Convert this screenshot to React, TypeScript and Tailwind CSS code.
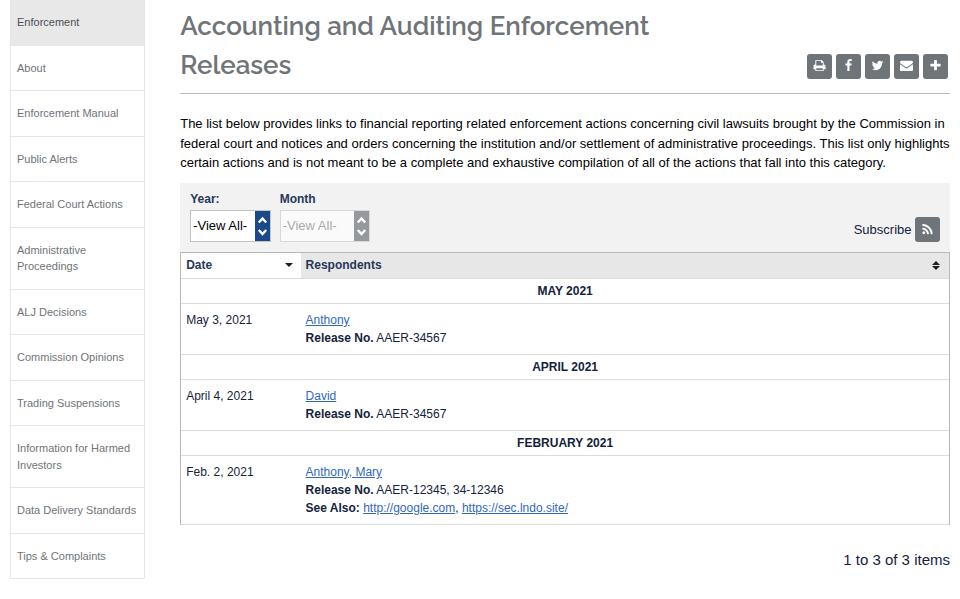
import React from "react";

const ICONS = {
  print:
    "M448 1536h896v-256h-896v256zm0-640h896v-384h-160q-40 0-68-28t-28-68v-160h-640v640zm1152 64q0-26-19-45t-45-19-45 19-19 45 19 45 45 19 45-19 19-45zm128 0v416q0 13-9.5 22.5t-22.5 9.5h-224v160q0 40-28 68t-68 28h-960q-40 0-68-28t-28-68v-160h-224q-13 0-22.5-9.5t-9.5-22.5v-416q0-79 56.5-135.5t135.5-56.5h64v-544q0-40 28-68t68-28h672q40 0 88 20t76 48l152 152q28 28 48 76t20 88v256h64q79 0 135.5 56.5t56.5 135.5z",
  facebook:
    "M1343 12v264h-157q-86 0-116 36t-30 108v189h293l-39 296h-254v759h-306v-759h-255v-296h255v-218q0-186 104-288.500t277-102.500q147 0 228 12z",
  twitter:
    "M1684 408q-67 98-162 167 1 14 1 42 0 130-38 259.500t-115.500 248.500-184.500 210.500-258 146-323 54.500q-271 0-496-145 35 4 78 4 225 0 401-138-105-2-188-64.500t-114-159.500q33 5 61 5 43 0 85-11-112-23-185.500-111.500t-73.500-205.500v-4q68 38 146 41-66-44-105-115t-39-154q0-88 44-163 121 149 294.500 238.500t371.500 99.500q-8-38-8-74 0-134 94.500-228.500t228.500-94.500q140 0 236 102 109-21 205-78-37 115-142 178 93-10 186-50z",
  envelope:
    "M1792 710v794q0 66-47 113t-113 47h-1472q-66 0-113-47t-47-113v-794q44 49 101 87 362 246 497 345 57 42 92.500 65.500t94.500 48 110 24.500h2q51 0 110-24.500t94.500-48 92.500-65.500q170-123 498-345 57-39 100-87zm0-294q0 79-49 151t-122 123q-376 261-468 325-10 7-42.500 31t-54 38.500-52 32.500-57.500 27-50 9h-2q-23 0-50-9t-57.500-27-52-32.500-54-38.500-42.500-31q-91-64-262-182.500t-205-142.500q-62-42-117-115.500t-55-136.500q0-78 41.500-130t118.500-52h1472q65 0 112.500 47t47.500 113z",
  plus: "M1600 736v192q0 40-28 68t-68 28h-416v416q0 40-28 68t-68 28h-192q-40 0-68-28t-28-68v-416h-416q-40 0-68-28t-28-68v-192q0-40 28-68t68-28h416v-416q0-40 28-68t68-28h192q40 0 68 28t28 68v416h416q40 0 68 28t28 68z",
  rss: "M576 1344q0 80-56 136t-136 56-136-56-56-136 56-136 136-56 136 56 56 136zm512 123q2 28-17 48-18 21-47 21h-135q-25 0-43-16.500t-20-41.500q-22-229-184.500-391.500t-391.500-184.500q-25-2-41.500-20t-16.500-43v-135q0-29 21-47 17-17 43-17h5q160 13 306 80.500t259 181.500q114 113 181.500 259t80.500 306zm512 2q2 27-18 47-18 20-46 20h-143q-26 0-44.500-17.500t-19.500-42.500q-12-215-101-408.500t-231.500-336-336-231.500-408.500-102q-25-1-42.500-19.500t-17.500-43.500v-143q0-28 20-46 18-18 44-18h3q262 13 501.500 120t425.500 294q187 186 294 425.500t120 501.500z",
};

const NAV = [
  "Enforcement",
  "About",
  "Enforcement Manual",
  "Public Alerts",
  "Federal Court Actions",
  "Administrative Proceedings",
  "ALJ Decisions",
  "Commission Opinions",
  "Trading Suspensions",
  "Information for Harmed Investors",
  "Data Delivery Standards",
  "Tips & Complaints",
];

function IconButton({ name }: { name: keyof typeof ICONS }) {
  return (
    <button
      className={`flex size-[25px] items-start justify-center rounded-[3px] bg-[#6f7478] ${
        name === "rss" ? "pt-1.5" : "pt-[5px]"
      }`}
    >
      <svg viewBox="0 0 1792 1792" className="size-[13px] fill-white">
        <path d={ICONS[name]} />
      </svg>
    </button>
  );
}

function Picker({ label, width, disabled }: { label: string; width: string; disabled?: boolean }) {
  return (
    <div>
      <div className="h-[18px] text-xs leading-[18px] font-bold text-[#283858]">{label}</div>
      <div
        className={`mt-[2px] flex h-8 items-stretch justify-between border ${width} ${
          disabled ? "border-[#d8d8d8] bg-[#fafafa] text-[#aaaaaa]" : "border-[#c4c4c4] bg-white text-black"
        }`}
      >
        <span className="pl-[2px] text-[13px] leading-[30px] whitespace-nowrap">-View All-</span>
        <span className={`flex w-[15px] items-center justify-center ${disabled ? "bg-[#95989c]" : "bg-[#1b4a8c]"}`}>
          <svg viewBox="0 0 15 30" className="h-[30px] w-[15px] fill-none stroke-white stroke-[2.4]">
            <path d="M3.800 11.500 7.500 7.500 11.200 11.500M3.800 19 7.500 23 11.200 19" />
          </svg>
        </span>
      </div>
    </div>
  );
}

function MonthRow({ children }: { children: React.ReactNode }) {
  return (
    <div className="h-[25px] border-b border-[#dcdcdc] text-center leading-6 font-bold">{children}</div>
  );
}

function Entry({ date, children }: { date: string; children: React.ReactNode }) {
  return (
    <div className="flex border-b border-[#dcdcdc] py-[7px] leading-[18px]">
      <div className="w-[120px] pl-[5px]">{date}</div>
      <div className="pl-[4.400px]">{children}</div>
    </div>
  );
}

function Link({ children }: { children: React.ReactNode }) {
  return (
    <a href="#" className="text-[#3268b8] underline">
      {children}
    </a>
  );
}

export default function App() {
  return (
    <div className="flex h-[599px] w-[960px] overflow-hidden bg-white pl-[10px] font-['Liberation_Sans',Arial,sans-serif] text-[#14233c]">
      <nav className="w-[135px] shrink-0 text-[11px] leading-[16.5px] text-[#6f7478]">
        {NAV.map((item, i) => (
          <div
            key={item}
            className={`border-x border-b border-[#e6e6e6] py-[14px] pr-[5px] pl-[6px] ${
              i === 0 ? "bg-[#e8e8e8] text-[#4c5054]" : ""
            }`}
          >
            {item}
          </div>
        ))}
      </nav>

      <main className="ml-[35.2px] w-[769.8px] shrink-0">
        <header className="flex h-[94px] items-start justify-between border-b border-[#b9bbbd] pt-[7px]">
          <h1 className="w-[520px] font-[Raleway,Lato,sans-serif] text-[26px] leading-[39px] font-semibold text-[#6f7478]">
            Accounting and Auditing Enforcement Releases
          </h1>
          <div className="mt-[47px] mr-[2px] flex gap-1">
            <IconButton name="print" />
            <IconButton name="facebook" />
            <IconButton name="twitter" />
            <IconButton name="envelope" />
            <IconButton name="plus" />
          </div>
        </header>

        <p className="mt-5 h-[69px] text-[13px] leading-[19.5px] whitespace-nowrap text-black">
          The list below provides links to financial reporting related enforcement actions concerning civil lawsuits brought by the Commission in
          <br />
          federal court and notices and orders concerning the institution and/or settlement of administrative proceedings. This list only highlights
          <br />
          certain actions and is not meant to be a complete and exhaustive compilation of all of the actions that fall into this category.
        </p>

        <section className="flex h-[69px] justify-between bg-[#f2f2f2] pl-[10px]">
          <div className="flex gap-[8.500px] pt-[7px]">
            <Picker label="Year:" width="w-[81px]" />
            <Picker label="Month" width="w-[90px]" disabled />
          </div>
          <div className="mt-[34px] mr-[10px] flex h-[25px] gap-[3.500px]">
            <span className="text-[13px] leading-[25px]">Subscribe</span>
            <IconButton name="rss" />
          </div>
        </section>

        <section className="border-x border-t border-[#b8b8b8] text-xs">
          <div className="flex h-[26px] border-b border-[#dcdcdc] bg-[#e7e7e7] leading-6 font-bold text-[#283858]">
            <div className="flex w-[120px] items-center justify-between bg-white pr-2 pl-[5px]">
              <span className="h-[25px]">Date</span>
              <svg viewBox="0 0 8 4" className="mb-px h-1 w-2 fill-[#1b1f24]">
                <path d="M0 0h8L4 4z" />
              </svg>
            </div>
            <div className="flex flex-1 items-center justify-between pr-[9px] pl-[4.400px]">
              <span className="h-[25px]">Respondents</span>
              <svg viewBox="0 0 8 9" className="h-[9px] w-2 fill-[#1b1f24]">
                <path d="M0 4 4 0 8 4zM0 5h8L4 9z" />
              </svg>
            </div>
          </div>
          <MonthRow>MAY 2021</MonthRow>
          <Entry date="May 3, 2021">
            <Link>Anthony</Link>
            <div>
              <b>Release No.</b> AAER-34567
            </div>
          </Entry>
          <MonthRow>APRIL 2021</MonthRow>
          <Entry date="April 4, 2021">
            <Link>David</Link>
            <div>
              <b>Release No.</b> AAER-34567
            </div>
          </Entry>
          <MonthRow>FEBRUARY 2021</MonthRow>
          <Entry date="Feb. 2, 2021">
            <Link>Anthony, Mary</Link>
            <div>
              <b>Release No.</b> AAER-12345, 34-12346
            </div>
            <div>
              <b>See Also:</b> <Link>http://google.com</Link>, <Link>https://sec.lndo.site/</Link>
            </div>
          </Entry>
        </section>

        <div className="mt-6 text-right text-[15px] leading-[22px]">1 to 3 of 3 items</div>
      </main>
    </div>
  );
}
